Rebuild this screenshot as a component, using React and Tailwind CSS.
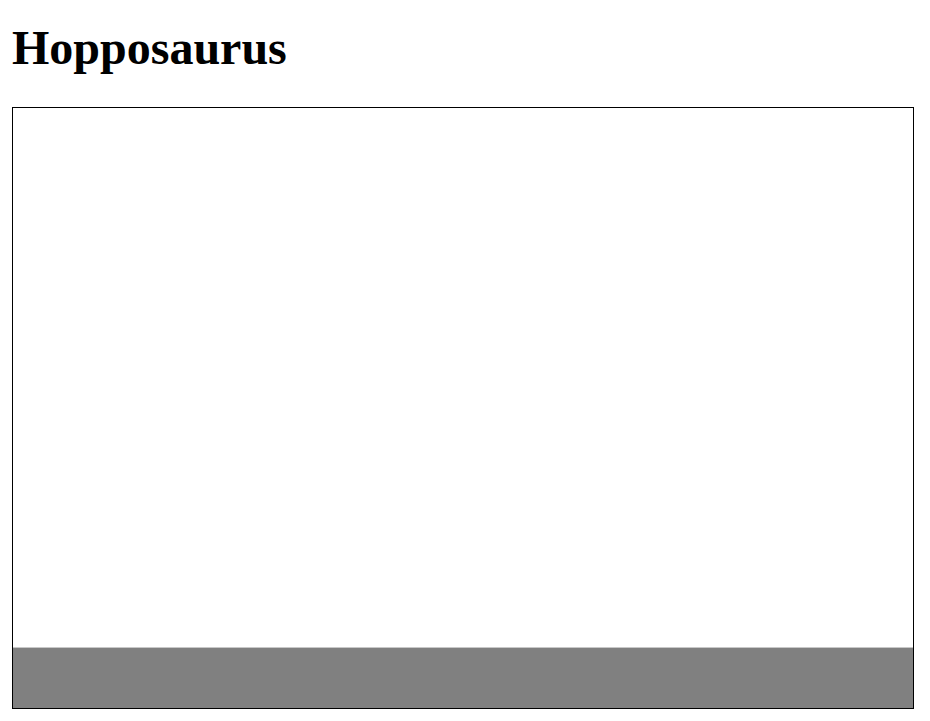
export default function App() {
  return (
    <div className="min-h-screen bg-white px-[12px] pt-[21px] font-['Liberation_Serif',serif] text-black">
      <h1 className="text-[48px] font-bold leading-[53px] mb-[33px]">Hopposaurus</h1>
      <div className="w-[902px] h-[602px] border border-black flex flex-col">
        <div className="flex-1 bg-white" />
        <div className="h-[61px] border-t border-[#c8c8c8] bg-[#808080]" />
      </div>
    </div>
  );
}
